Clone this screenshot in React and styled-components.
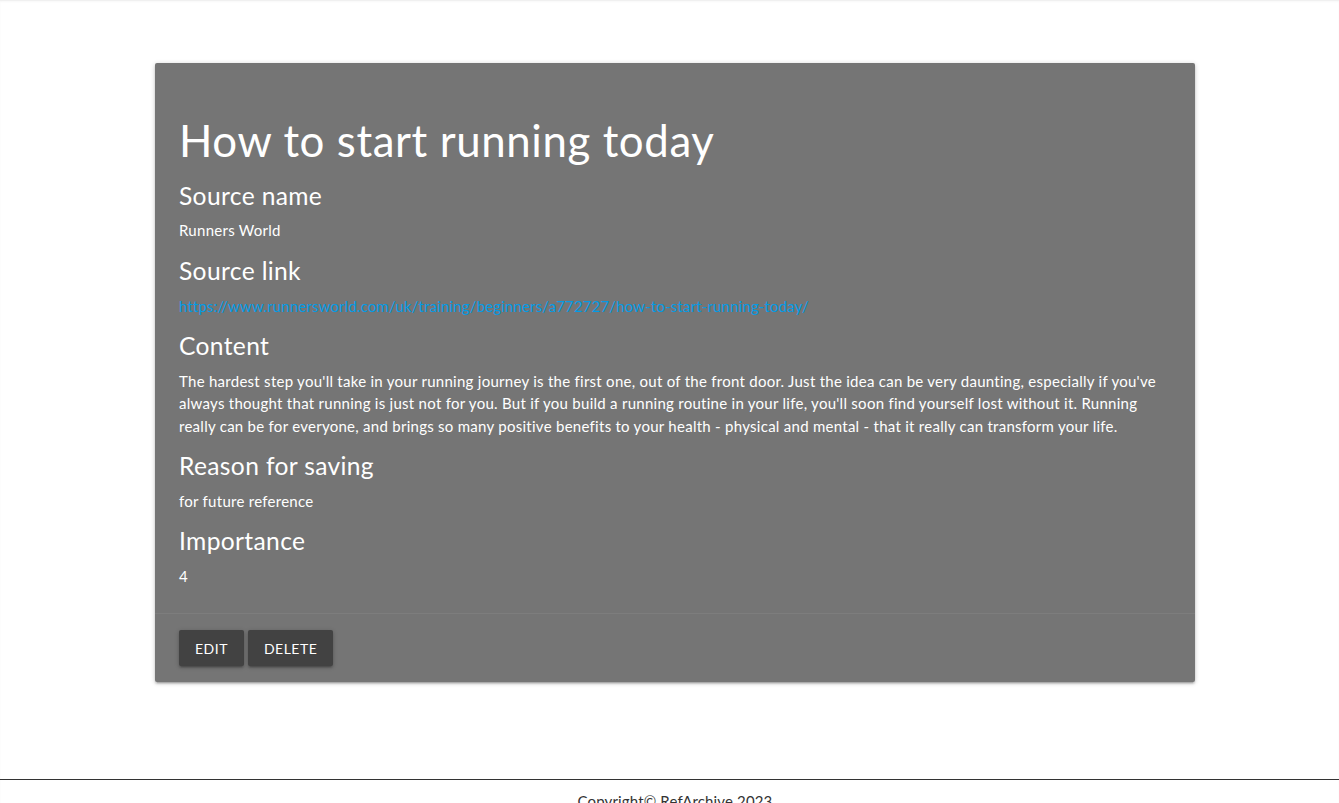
import React from 'react';
import styled, { createGlobalStyle } from 'styled-components';

const GlobalStyle = createGlobalStyle`
  html {
    font-size: 15px;
  }
  body {
    margin: 0;
    background: #fff;
    font-family: 'Lato', 'Open Sans', sans-serif;
    color: rgba(0, 0, 0, 0.87);
    line-height: 1.5;
    overflow: hidden;
  }
`;

const Page = styled.div`
  display: flex;
  flex-direction: column;
  border-top: 1px solid #f0f0f0;
  box-shadow: inset 0 1px 2px rgba(0, 0, 0, 0.03);
`;

const Main = styled.main`
  padding: 62px 0 97px 11px;
  display: flex;
  justify-content: center;
`;

const Card = styled.article`
  width: 1040px;
  background: #757575;
  color: #fff;
  border-radius: 2px;
  box-shadow: 0 2px 2px 0 rgba(0, 0, 0, 0.14), 0 3px 1px -2px rgba(0, 0, 0, 0.12),
    0 1px 5px 0 rgba(0, 0, 0, 0.2);
`;

const CardContent = styled.div`
  padding: 24px 24px 26px;
`;

const Title = styled.h3`
  font-size: 2.92rem;
  font-weight: 400;
  line-height: 110%;
  letter-spacing: 0.6px;
  margin: 1.9467rem 0 1.168rem;
`;

const Heading = styled.h5`
  font-size: 1.64rem;
  font-weight: 400;
  line-height: 110%;
  letter-spacing: 0.35px;
  margin: 1rem 0 0.7rem;
`;

const Text = styled.p`
  margin: 0;
  font-size: 15px;
  line-height: 22.5px;
  letter-spacing: 0.27px;
`;

const Link = styled.a`
  color: #039be5;
  text-decoration: none;
  letter-spacing: 0.15px;
`;

const CardAction = styled.div`
  border-top: 1px solid rgba(160, 160, 160, 0.2);
  padding: 16px 24px;
  display: flex;
  gap: 4px;
`;

const Button = styled.button`
  height: 36px;
  padding: 0 16px;
  border: none;
  border-radius: 2px;
  background: #424242;
  color: #fff;
  font-family: inherit;
  font-size: 14px;
  letter-spacing: 0.5px;
  text-transform: uppercase;
  cursor: pointer;
  box-shadow: 0 2px 2px 0 rgba(0, 0, 0, 0.14), 0 3px 1px -2px rgba(0, 0, 0, 0.12),
    0 1px 5px 0 rgba(0, 0, 0, 0.2);
`;

const Footer = styled.footer`
  border-top: 1px solid #333;
  padding: 10px 0 12px 11px;
  text-align: center;
  color: #333;
  font-size: 15px;
  letter-spacing: 0.15px;
`;

const fields = [
  { label: 'Source name', value: 'Runners World' },
  {
    label: 'Source link',
    value: 'https://www.runnersworld.com/uk/training/beginners/a772727/how-to-start-running-today/',
    link: true,
  },
  {
    label: 'Content',
    value:
      "The hardest step you'll take in your running journey is the first one, out of the front door. Just the idea can be very daunting, especially if you've always thought that running is just not for you. But if you build a running routine in your life, you'll soon find yourself lost without it. Running really can be for everyone, and brings so many positive benefits to your health - physical and mental - that it really can transform your life.",
  },
  { label: 'Reason for saving', value: 'for future reference' },
  { label: 'Importance', value: '4' },
];

export default function App() {
  return (
    <Page>
      <GlobalStyle />
      <Main>
        <Card>
          <CardContent>
            <Title>How to start running today</Title>
            {fields.map((f) => (
              <React.Fragment key={f.label}>
                <Heading>{f.label}</Heading>
                <Text>{f.link ? <Link href={f.value}>{f.value}</Link> : f.value}</Text>
              </React.Fragment>
            ))}
          </CardContent>
          <CardAction>
            <Button>Edit</Button>
            <Button>Delete</Button>
          </CardAction>
        </Card>
      </Main>
      <Footer>Copyright© RefArchive 2023</Footer>
    </Page>
  );
}
